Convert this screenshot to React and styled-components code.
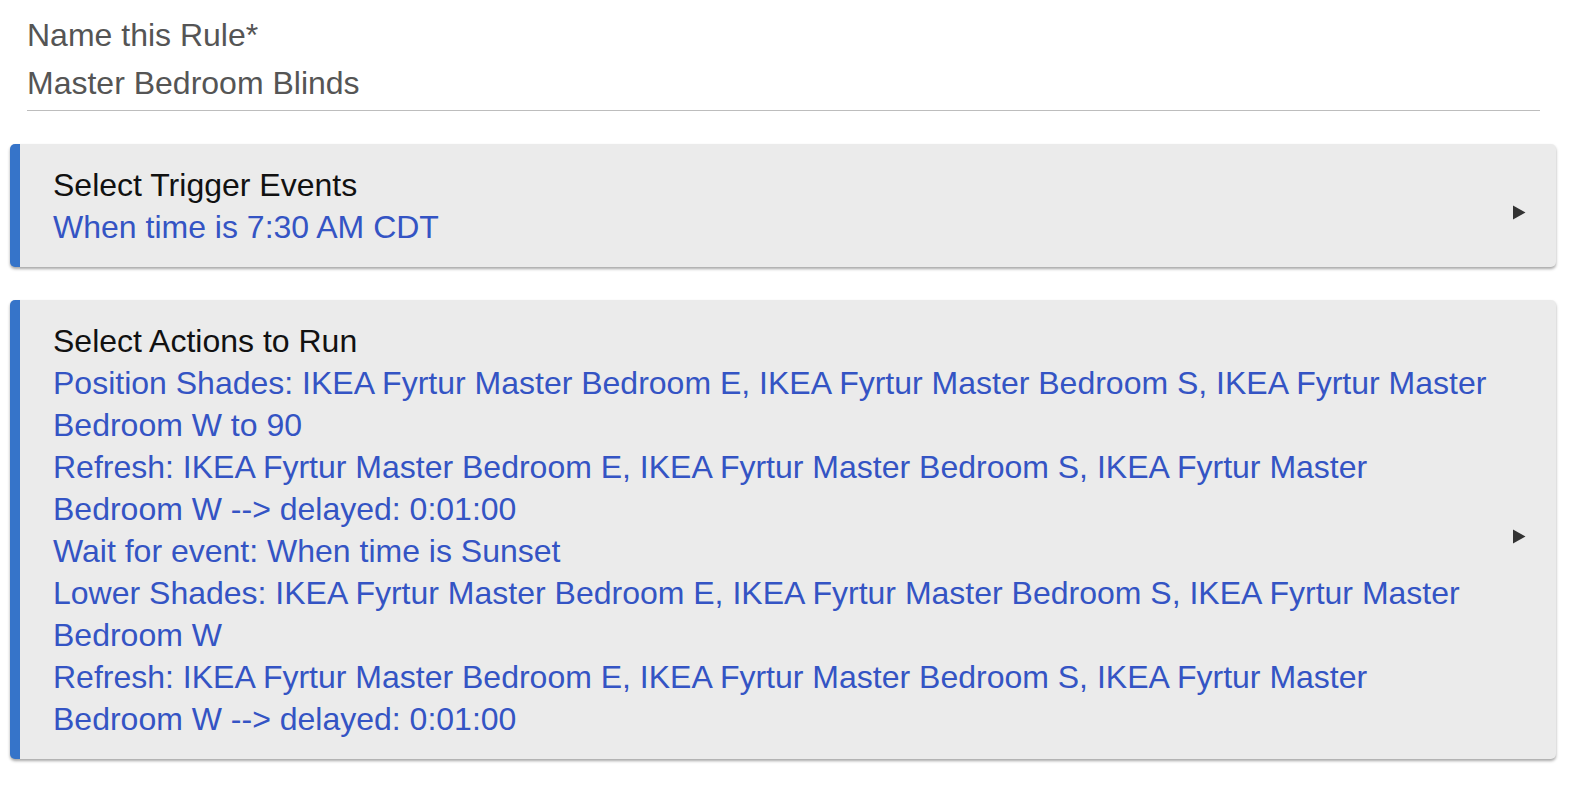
import React from "react";
import styled, { createGlobalStyle } from "styled-components";

const Global = createGlobalStyle`
  html, body { margin: 0; padding: 0; background: #ffffff; }
  body { font-family: "Liberation Sans", Arial, Helvetica, sans-serif; }
`;

const Page = styled.div`
  padding: 14px 14px 20px 10px;
  display: flex;
  flex-direction: column;
  gap: 33px;
`;

const Field = styled.div`
  margin: 0 16px 0 17px;
  border-bottom: 1px solid #bdbdbd;
  padding-bottom: 6px;
  display: flex;
  flex-direction: column;
  gap: 6px;
`;

const Label = styled.div`
  font-size: 32px;
  line-height: 42px;
  color: #555555;
`;

const Value = styled.div`
  font-size: 32px;
  line-height: 42px;
  color: #555555;
`;

const Card = styled.div`
  background: #ebebeb;
  border-left: 10px solid #3674c9;
  border-radius: 5px;
  box-shadow: 0 2px 3px rgba(0, 0, 0, 0.35);
  padding: 20px 30px 19px 33px;
  display: flex;
  align-items: center;
  gap: 12px;
`;

const Body = styled.div`
  flex: 1;
  min-width: 0;
`;

const Title = styled.div`
  font-size: 32px;
  line-height: 42px;
  color: #111111;
`;

const Line = styled.div`
  font-size: 32px;
  line-height: 42px;
  color: #3454c4;
`;

const Arrow = styled.svg`
  flex: none;
  width: 14px;
  height: 15px;
  transform: translateY(6px);
`;

const Chevron = () => (
  <Arrow viewBox="0 0 14 15">
    <path d="M1 0.5 L13.5 7.5 L1 14.5 Z" fill="#333333" />
  </Arrow>
);

const actions = [
  "Position Shades: IKEA Fyrtur Master Bedroom E, IKEA Fyrtur Master Bedroom S, IKEA Fyrtur Master Bedroom W to 90",
  "Refresh: IKEA Fyrtur Master Bedroom E, IKEA Fyrtur Master Bedroom S, IKEA Fyrtur Master Bedroom W --> delayed: 0:01:00",
  "Wait for event: When time is Sunset",
  "Lower Shades: IKEA Fyrtur Master Bedroom E, IKEA Fyrtur Master Bedroom S, IKEA Fyrtur Master Bedroom W",
  "Refresh: IKEA Fyrtur Master Bedroom E, IKEA Fyrtur Master Bedroom S, IKEA Fyrtur Master Bedroom W --> delayed: 0:01:00",
];

export default function App() {
  return (
    <>
      <Global />
      <Page>
        <Field>
          <Label>Name this Rule*</Label>
          <Value>Master Bedroom Blinds</Value>
        </Field>
        <Card>
          <Body>
            <Title>Select Trigger Events</Title>
            <Line>When time is 7:30 AM CDT</Line>
          </Body>
          <Chevron />
        </Card>
        <Card>
          <Body>
            <Title>Select Actions to Run</Title>
            {actions.map((a, i) => (
              <Line key={i}>{a}</Line>
            ))}
          </Body>
          <Chevron />
        </Card>
      </Page>
    </>
  );
}
